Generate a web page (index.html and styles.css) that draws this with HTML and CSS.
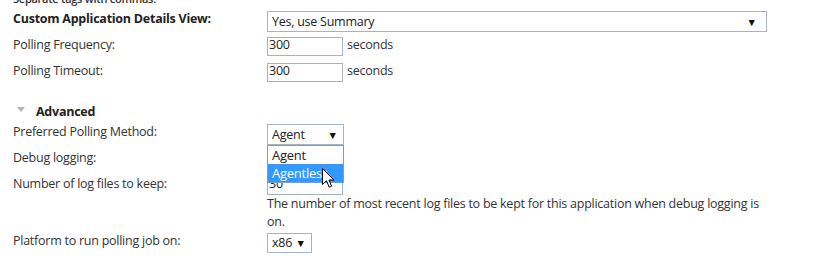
FILE: index.html
```html
<!DOCTYPE html>
<html>
<head>
<meta charset="utf-8">
<link rel="stylesheet" href="styles.css">
</head>
<body>
<div class="form">
  <div class="note">Separate tags with commas.</div>

  <div class="row r-custom">
    <div class="label bold">Custom Application Details View:</div>
    <div class="select wide"><span class="val">Yes, use Summary</span><span class="arrow">▼</span></div>
  </div>

  <div class="row r-freq">
    <div class="label">Polling Frequency:</div>
    <div class="input">300</div>
    <span class="unit">seconds</span>
  </div>

  <div class="row r-timeout">
    <div class="label">Polling Timeout:</div>
    <div class="input">300</div>
    <span class="unit">seconds</span>
  </div>

  <div class="section"><span class="tri"></span><span class="section-title">Advanced</span></div>

  <div class="row r-pref">
    <div class="label">Preferred Polling Method:</div>
    <div class="dd-wrap">
      <div class="select method"><span class="val">Agent</span><span class="arrow">▼</span></div>
      <ul class="dd-list">
        <li class="dd-item">Agent</li>
        <li class="dd-item active">Agentless</li>
      </ul>
      <svg class="cursor" width="13" height="21" viewBox="0 0 13 21">
        <path d="M0.5 0.5 V16.5 L4.5 12.8 L7.2 19.2 L9.6 18.2 L7 12 H12 Z" fill="#fff" stroke="#000" stroke-width="1" stroke-linejoin="miter"/>
      </svg>
    </div>
  </div>

  <div class="row r-debug">
    <div class="label">Debug logging:</div>
  </div>

  <div class="row r-logs">
    <div class="label">Number of log files to keep:</div>
    <div class="field">
      <div class="input">30</div>
      <div class="help">The number of most recent log files to be kept for this application when debug logging is on.</div>
    </div>
  </div>

  <div class="row r-platform">
    <div class="label">Platform to run polling job on:</div>
    <div class="select platform"><span class="val">x86</span><span class="arrow">▼</span></div>
  </div>
</div>
</body>
</html>
```
FILE: styles.css
```css
html, body {
  margin: 0;
  padding: 0;
  background: #fff;
}
body {
  font-family: "Open Sans", "Liberation Sans", sans-serif;
  font-size: 12.5px;
  letter-spacing: -0.25px;
  color: #333;
  overflow: hidden;
}
.form {
  padding-left: 13px;
}
.note {
  font-size: 11px;
  font-weight: 600;
  line-height: 12px;
  height: 12px;
  margin-top: -7px;
  color: #333;
}
.row {
  display: flex;
  align-items: flex-start;
}
.label {
  width: 254px;
  flex: none;
  line-height: 18px;
  margin-top: -1px;
  white-space: nowrap;
}
.bold {
  font-weight: 700;
  color: #222;
}
.r-custom { margin-top: 6px; }
.r-freq { margin-top: 5px; }
.r-timeout { margin-top: 7px; }
.r-pref { margin-top: 3px; }
.r-debug { margin-top: 5px; height: 20px; }
.r-logs { margin-top: 6px; }
.r-platform { margin-top: 2px; }

.select {
  box-sizing: border-box;
  height: 21px;
  border: 1px solid #a4b3c6;
  background: #fff;
  display: flex;
  align-items: center;
  justify-content: space-between;
  padding: 0 5px 0 4px;
  line-height: 18px;
  color: #222;
}
.select.wide { width: 500px; padding-right: 9px; }
.select.method { width: 77px; height: 21px; }
.select.platform { width: 45px; height: 20px; padding-right: 5px; }
.arrow {
  font-size: 10.5px;
  color: #111;
  line-height: 10px;
  letter-spacing: 0;
}
.input {
  box-sizing: border-box;
  width: 76px;
  height: 19px;
  border: 1px solid #a4b3c6;
  line-height: 14px;
  padding: 0 1px;
  color: #222;
  background: #fff;
}
.unit {
  line-height: 18px;
  margin-top: -1px;
  margin-left: 4px;
}
.section {
  display: flex;
  align-items: center;
  margin-top: 21px;
  height: 18px;
  padding-left: 4px;
}
.tri {
  width: 0;
  height: 0;
  border-left: 4px solid transparent;
  border-right: 4px solid transparent;
  border-top: 5px solid #b4b4b4;
  margin-right: 11px;
  margin-top: -6px;
}
.section-title {
  font-weight: 700;
  line-height: 18px;
  color: #222;
}
.dd-wrap {
  position: relative;
}
.dd-list {
  position: absolute;
  left: 0;
  top: 21px;
  width: 77px;
  box-sizing: border-box;
  margin: 0;
  padding: 0;
  list-style: none;
  border: 1px solid #7f9db9;
  background: #fff;
  z-index: 2;
}
.dd-item {
  line-height: 18px;
  height: 18px;
  padding-left: 4px;
  color: #222;
  white-space: nowrap;
  overflow: hidden;
  font-size: 13px;
}
.dd-item.active {
  background: #3399ff;
  color: #fff;
}
.cursor {
  position: absolute;
  left: 55px;
  top: 44px;
  z-index: 3;
}
.field {
  display: flex;
  flex-direction: column;
  width: 500px;
}
.help {
  line-height: 18px;
  color: #333;
  margin-top: 0;
}
```
